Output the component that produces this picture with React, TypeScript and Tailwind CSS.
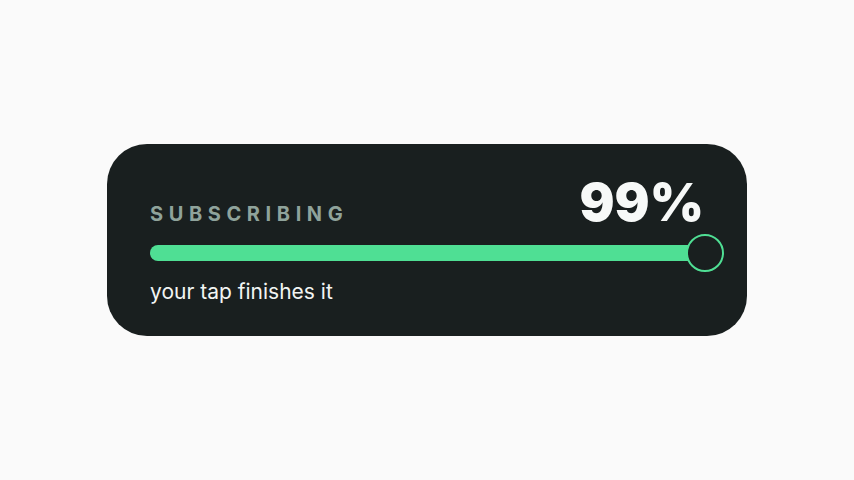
export default function App() {
  const percent = 99;

  return (
    <div className="flex h-screen w-full items-center justify-center bg-[#fafafa] font-['Inter','Liberation_Sans',sans-serif]">
      <div className="w-[640px] h-[192px] rounded-[40px] bg-[#191f1f] px-[43px] pt-[33px]">
        {/* Header */}
        <div className="flex items-baseline justify-between">
          <span className="text-[20px] font-bold tracking-[0.28em] text-[#8fa39b] leading-none">
            SUBSCRIBING
          </span>
          <span className="text-[52px] font-black leading-none text-[#f7f9f8]">
            {percent}%
          </span>
        </div>

        {/* Track */}
        <div className="relative mt-[16px] h-[16px] w-full">
          <div className="h-full w-[555px] rounded-full bg-[#4fdf94]" />
          <div className="absolute right-[-20px] top-1/2 h-[38px] w-[38px] -translate-y-1/2 rounded-full border-2 border-[#4fdf94] bg-[#191f1f]" />
        </div>

        <p className="mt-[20px] text-[21px] leading-none text-[#f2f5f3]">
          your tap finishes it
        </p>
      </div>
    </div>
  );
}
